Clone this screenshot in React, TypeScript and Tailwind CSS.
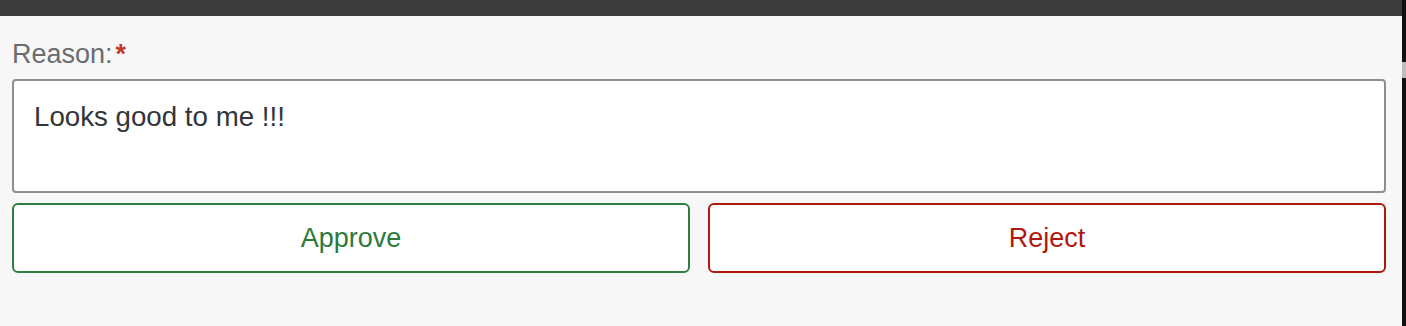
import React from 'react';

export default function App() {
  return (
    <div className="flex h-[326px] w-[1406px] bg-[#111111] font-['Liberation_Sans',Arial,sans-serif]">
      <div className="flex flex-1 flex-col bg-[#f7f7f7]">
        <div className="h-[16px] bg-[#3b3b3b]" />
        <div className="flex flex-col px-[12px] pt-[20px]">
          <label className="flex items-start text-[27px] leading-[36px] text-[#6a6d70]">
            Reason:<span className="ml-[3px] font-bold text-[#c0392b]">*</span>
          </label>
          <div className="mt-[7px] h-[114px] w-[1374px] rounded-[4px] border-2 border-[#8a8f96] bg-white px-[20px] pt-[18px] text-[27.7px] leading-[36px] text-[#32363a]">
            Looks good to me !!!
          </div>
          <div className="mt-[10px] flex w-[1374px] gap-[18px]">
            <button className="h-[70px] flex-1 rounded-[6px] border-2 border-[#2f7d3f] bg-white text-[27px] text-[#2b7a3b]">
              Approve
            </button>
            <button className="h-[70px] flex-1 rounded-[6px] border-2 border-[#b0170f] bg-white text-[27px] text-[#b0170f]">
              Reject
            </button>
          </div>
        </div>
      </div>
      <div className="flex w-[4px] flex-col">
        <div className="h-[62px]" />
        <div className="h-[16px] bg-[#bdbdbd]" />
      </div>
    </div>
  );
}
